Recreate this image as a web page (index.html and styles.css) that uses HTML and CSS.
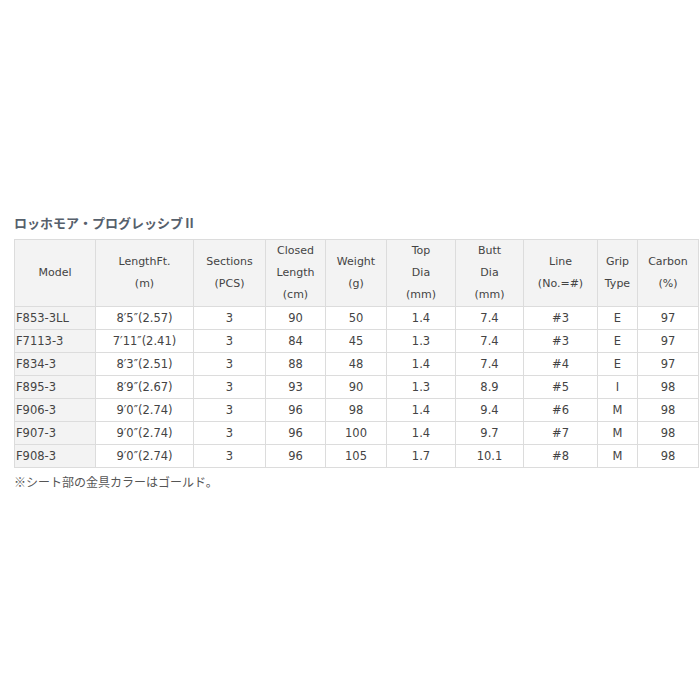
FILE: index.html
```html
<!DOCTYPE html>
<html lang="ja">
<head>
<meta charset="utf-8">
<link rel="stylesheet" href="styles.css">
</head>
<body>
<div class="page">
  <h2 class="title">ロッホモア・プログレッシブⅡ</h2>
  <table class="spec">
    <colgroup>
      <col class="c1"><col class="c2"><col class="c3"><col class="c4"><col class="c5">
      <col class="c6"><col class="c7"><col class="c8"><col class="c9"><col class="c10">
    </colgroup>
    <thead>
      <tr>
        <th>Model</th>
        <th>LengthFt.<br>(m)</th>
        <th>Sections<br>(PCS)</th>
        <th>Closed<br>Length<br>(cm)</th>
        <th>Weight<br>(g)</th>
        <th>Top<br>Dia<br>(mm)</th>
        <th>Butt<br>Dia<br>(mm)</th>
        <th>Line<br>(No.=#)</th>
        <th>Grip<br>Type</th>
        <th>Carbon<br>(%)</th>
      </tr>
    </thead>
    <tbody>
      <tr><td class="model">F853-3LL</td><td>8′5″(2.57)</td><td>3</td><td>90</td><td>50</td><td>1.4</td><td>7.4</td><td>#3</td><td>E</td><td>97</td></tr>
      <tr><td class="model">F7113-3</td><td>7′11″(2.41)</td><td>3</td><td>84</td><td>45</td><td>1.3</td><td>7.4</td><td>#3</td><td>E</td><td>97</td></tr>
      <tr><td class="model">F834-3</td><td>8′3″(2.51)</td><td>3</td><td>88</td><td>48</td><td>1.4</td><td>7.4</td><td>#4</td><td>E</td><td>97</td></tr>
      <tr><td class="model">F895-3</td><td>8′9″(2.67)</td><td>3</td><td>93</td><td>90</td><td>1.3</td><td>8.9</td><td>#5</td><td>I</td><td>98</td></tr>
      <tr><td class="model">F906-3</td><td>9′0″(2.74)</td><td>3</td><td>96</td><td>98</td><td>1.4</td><td>9.4</td><td>#6</td><td>M</td><td>98</td></tr>
      <tr><td class="model">F907-3</td><td>9′0″(2.74)</td><td>3</td><td>96</td><td>100</td><td>1.4</td><td>9.7</td><td>#7</td><td>M</td><td>98</td></tr>
      <tr><td class="model">F908-3</td><td>9′0″(2.74)</td><td>3</td><td>96</td><td>105</td><td>1.7</td><td>10.1</td><td>#8</td><td>M</td><td>98</td></tr>
    </tbody>
  </table>
  <p class="note">※シート部の金具カラーはゴールド。</p>
</div>
</body>
</html>
```
FILE: styles.css
```css
html, body {
  margin: 0;
  padding: 0;
  background: #fff;
}
.page {
  padding: 213px 0 0 14px;
  font-family: "DejaVu Sans", "Noto Sans CJK JP", sans-serif;
  color: #444;
}
.title {
  margin: 0 0 6px 0;
  font-family: "Noto Sans CJK JP", sans-serif;
  font-size: 13px;
  line-height: 20px;
  font-weight: 700;
  color: #56606c;
}
.spec {
  border-collapse: collapse;
  table-layout: fixed;
  width: 685px;
  font-size: 11.5px;
}
.c1 { width: 81px; }
.c2 { width: 98px; }
.c3 { width: 72px; }
.c4 { width: 60px; }
.c5 { width: 61px; }
.c6 { width: 69px; }
.c7 { width: 68px; }
.c8 { width: 74px; }
.c9 { width: 40px; }
.c10 { width: 61px; }
.spec th,
.spec td {
  border: 1px solid #dcdcdc;
  padding: 0;
  text-align: center;
  vertical-align: middle;
  line-height: 22px;
  font-weight: 400;
  white-space: nowrap;
  overflow: hidden;
}
.spec th {
  background: #f3f3f3;
  height: 66px;
  font-size: 11px;
}
.spec td {
  height: 22px;
}
.spec td.model {
  text-align: left;
  padding-left: 1px;
  background: #f3f3f3;
}
.note {
  margin: 4px 0 0 0;
  font-family: "Noto Sans CJK JP", sans-serif;
  font-size: 12px;
  line-height: 20px;
  color: #555;
}
```
